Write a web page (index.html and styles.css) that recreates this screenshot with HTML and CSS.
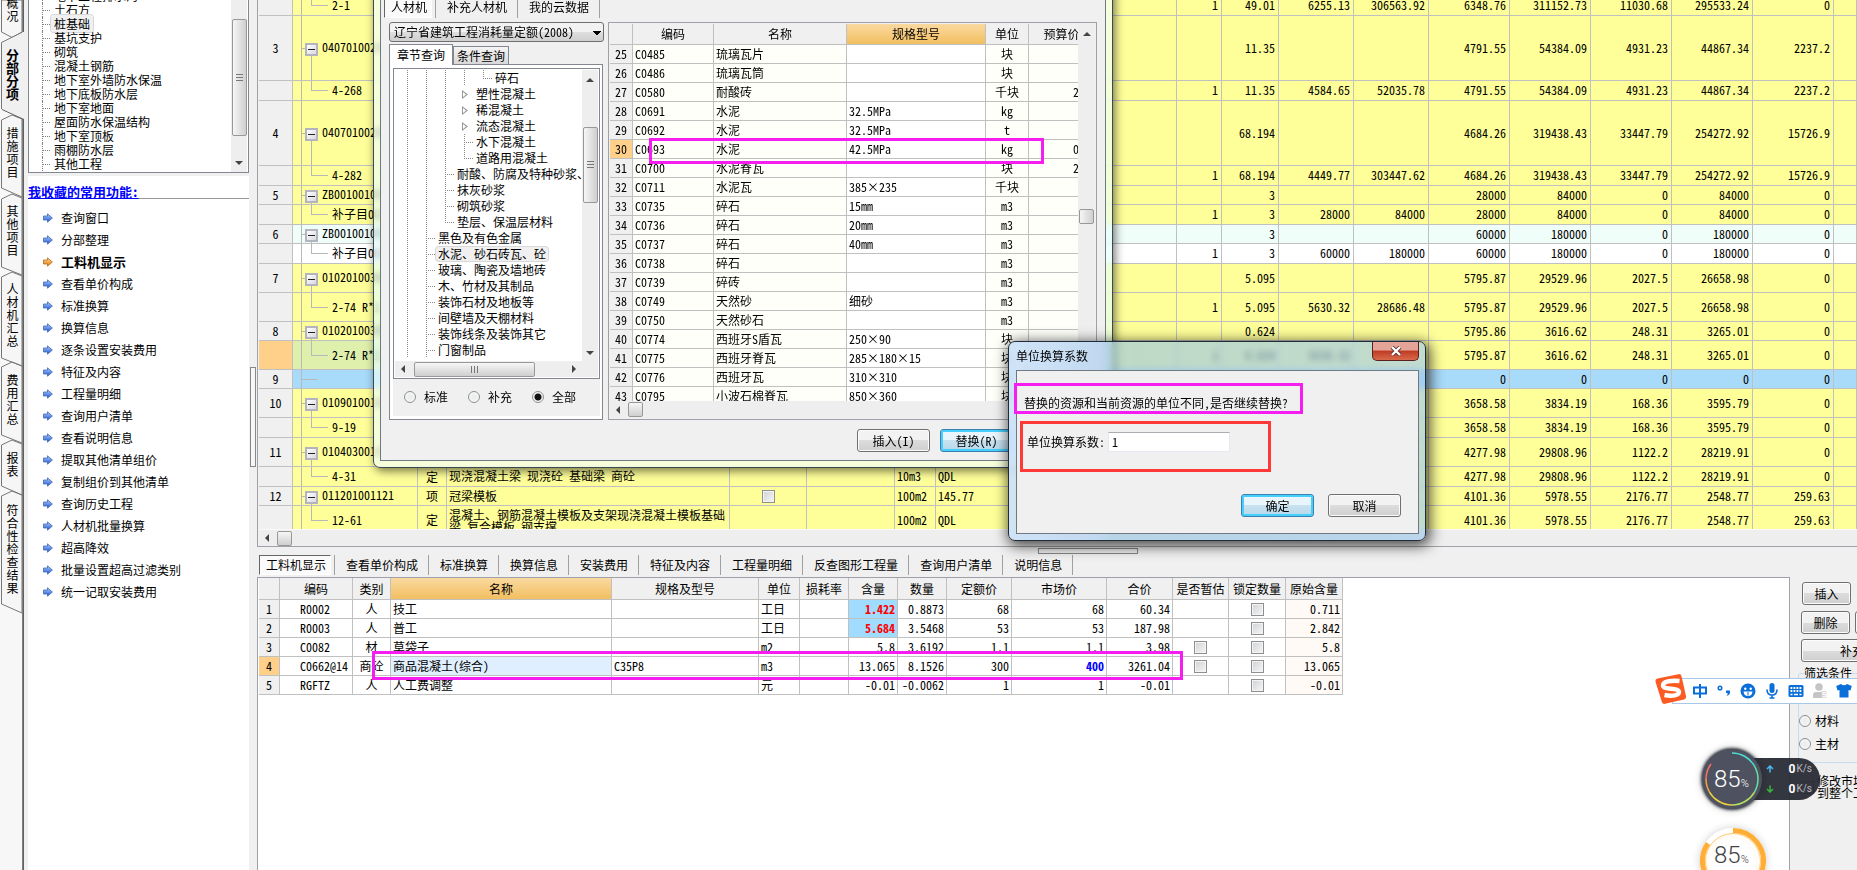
FILE: index.html
```html
<!DOCTYPE html>
<html lang="zh-CN">
<head>
<meta charset="utf-8">
<title>分部分项 - 工料机显示</title>
<link rel="stylesheet" href="styles.css">
</head>
<body>
<svg class="defs" width="0" height="0" aria-hidden="true">
  <defs>
    <linearGradient id="blueFill" x1="0" y1="0" x2="0" y2="1"><stop offset="0" stop-color="#b4cdf8"/><stop offset="1" stop-color="#1f57d0"/></linearGradient>
    <linearGradient id="orangeFill" x1="0" y1="0" x2="0" y2="1"><stop offset="0" stop-color="#ffd9a0"/><stop offset="1" stop-color="#e07808"/></linearGradient>
    <symbol id="arrow" viewBox="0 0 10 10"><path d="M.5 3h4V.8L9.4 5 4.500 9.200V7h-4z" stroke="#3c68b8" stroke-width=".8"/></symbol>
    <symbol id="arrow-hot" viewBox="0 0 10 10"><path d="M.5 3h4V.8L9.400 5 4.500 9.200V7h-4z" stroke="#b86a18" stroke-width=".8"/></symbol>
  </defs>
</svg>
<div class="app">
  <nav class="strip" aria-label="模块">
    <svg class="strip-lines" width="24" height="870" viewBox="0 0 24 870" aria-hidden="true">
      <path class="tab-face" d="M1.500 0V32L12 37.500 22 32V0zM1.500 120V188L22 197V119L12 115zM1.500 199V267L22 275V198L12 194zM1.500 277V358L22 366V276L12 272zM1.500 367V435L22 443V366L12 362zM1.500 445V486L22 495V444L12 440zM1.500 496V604L22 613V495L12 491z"/>
      <path class="tab-active" d="M1.500 42.500L24 32V119L1.500 109z"/>
      <path class="tab-rim" d="M22.500 32L1.500 42.500V109"/>
      <path class="tab-edge" d="M22.500 119V870M22.500 0V32"/>
      <path class="tab-shade" d="M23.500 119V870M23.500 0V32M2 109.500L24 119.500"/>
    </svg>
    <button type="button">工程概况</button>
    <button type="button" class="active">分部分项</button>
    <button type="button">措施项目</button>
    <button type="button">其他项目</button>
    <button type="button">人材机汇总</button>
    <button type="button">费用汇总</button>
    <button type="button">报表</button>
    <button type="button">符合性检查结果</button>
  </nav>

  <aside class="sidebar">
    <div class="sections">
      <ul class="section-tree">
        <li><span>地下工程排水沟</span></li>
        <li><span>土石方</span></li>
        <li><span class="picked">桩基础</span></li>
        <li><span>基坑支护</span></li>
        <li><span>砌筑</span></li>
        <li><span>混凝土钢筋</span></li>
        <li><span>地下室外墙防水保温</span></li>
        <li><span>地下底板防水层</span></li>
        <li><span>地下室地面</span></li>
        <li><span>屋面防水保温结构</span></li>
        <li><span>地下室顶板</span></li>
        <li><span>雨棚防水层</span></li>
        <li><span>其他工程</span></li>
      </ul>
      <div class="vscroll side-scroll"><i class="thumb grip"></i><i class="down"></i></div>
    </div>
    <div class="favorites">
      <h2>我收藏的常用功能:</h2>
      <ul>
        <li><svg><use href="#arrow"/></svg><a href="#">查询窗口</a></li>
        <li><svg><use href="#arrow"/></svg><a href="#">分部整理</a></li>
        <li class="hot"><svg><use href="#arrow-hot"/></svg><a href="#">工料机显示</a></li>
        <li><svg><use href="#arrow"/></svg><a href="#">查看单价构成</a></li>
        <li><svg><use href="#arrow"/></svg><a href="#">标准换算</a></li>
        <li><svg><use href="#arrow"/></svg><a href="#">换算信息</a></li>
        <li><svg><use href="#arrow"/></svg><a href="#">逐条设置安装费用</a></li>
        <li><svg><use href="#arrow"/></svg><a href="#">特征及内容</a></li>
        <li><svg><use href="#arrow"/></svg><a href="#">工程量明细</a></li>
        <li><svg><use href="#arrow"/></svg><a href="#">查询用户清单</a></li>
        <li><svg><use href="#arrow"/></svg><a href="#">查看说明信息</a></li>
        <li><svg><use href="#arrow"/></svg><a href="#">提取其他清单组价</a></li>
        <li><svg><use href="#arrow"/></svg><a href="#">复制组价到其他清单</a></li>
        <li><svg><use href="#arrow"/></svg><a href="#">查询历史工程</a></li>
        <li><svg><use href="#arrow"/></svg><a href="#">人材机批量换算</a></li>
        <li><svg><use href="#arrow"/></svg><a href="#">超高降效</a></li>
        <li><svg><use href="#arrow"/></svg><a href="#">批量设置超高过滤类别</a></li>
        <li><svg><use href="#arrow"/></svg><a href="#">统一记取安装费用</a></li>
      </ul>
    </div>
  </aside>

  <div class="gutter"><i></i></div>

  <main class="main">
    <section class="bill">
      <div class="bill-view">
        <table class="grid bill-grid">
          <colgroup><col class="c34"><col class="c125"><col class="c29"><col class="c283"><col class="c77"><col class="c88"><col class="c41"><col class="c241"><col class="c45"><col class="c57"><col class="c75"><col class="c75"><col class="c81"><col class="c81"><col class="c81"><col class="c81"><col class="c81"><col></colgroup>
          <tbody>
            <tr class="h20"><th><td class="kid">2-1<td colspan="6"><td>1<td>49.01<td>6255.13<td>306563.92<td>6348.76<td>311152.73<td>11030.68<td>295533.24<td>0<td></tr>
            <tr class="h65"><th>3<td class="dad"><button type="button" class="toggle" aria-label="折叠"></button>040701002003<td colspan="6"><td><td>11.35<td><td><td>4791.55<td>54384.09<td>4931.23<td>44867.34<td>2237.2<td></tr>
            <tr class="h20"><th><td class="kid">4-268<td colspan="6"><td>1<td>11.35<td>4584.65<td>52035.78<td>4791.55<td>54384.09<td>4931.23<td>44867.34<td>2237.2<td></tr>
            <tr class="h65"><th>4<td class="dad"><button type="button" class="toggle" aria-label="折叠"></button>040701002004<td colspan="6"><td><td>68.194<td><td><td>4684.26<td>319438.43<td>33447.79<td>254272.92<td>15726.9<td></tr>
            <tr class="h20"><th><td class="kid">4-282<td colspan="6"><td>1<td>68.194<td>4449.77<td>303447.62<td>4684.26<td>319438.43<td>33447.79<td>254272.92<td>15726.9<td></tr>
            <tr><th>5<td class="dad"><button type="button" class="toggle" aria-label="折叠"></button>ZB001001001<td colspan="6"><td><td>3<td><td><td>28000<td>84000<td>0<td>84000<td>0<td></tr>
            <tr class="h20"><th><td class="kid">补子目001<td colspan="6"><td>1<td>3<td>28000<td>84000<td>28000<td>84000<td>0<td>84000<td>0<td></tr>
            <tr class="mint"><th>6<td class="dad"><button type="button" class="toggle" aria-label="折叠"></button>ZB001001002<td colspan="6"><td><td>3<td><td><td>60000<td>180000<td>0<td>180000<td>0<td></tr>
            <tr class="h20 plain"><th><td class="kid">补子目002<td colspan="6"><td>1<td>3<td>60000<td>180000<td>60000<td>180000<td>0<td>180000<td>0<td></tr>
            <tr class="h29"><th>7<td class="dad"><button type="button" class="toggle" aria-label="折叠"></button>010201003001<td colspan="6"><td><td>5.095<td><td><td>5795.87<td>29529.96<td>2027.5<td>26658.98<td>0<td></tr>
            <tr class="h29"><th><td class="kid">2-74 R*1.15<td colspan="6"><td>1<td>5.095<td>5630.32<td>28686.48<td>5795.87<td>29529.96<td>2027.5<td>26658.98<td>0<td></tr>
            <tr><th>8<td class="dad"><button type="button" class="toggle" aria-label="折叠"></button>010201003002<td colspan="6"><td><td>0.624<td><td><td>5795.86<td>3616.62<td>248.31<td>3265.01<td>0<td></tr>
            <tr class="h29 current"><th><td class="kid">2-74 R*1.15<td colspan="6"><td>1<td>0.624<td>5630.32<td><td>5795.87<td>3616.62<td>248.31<td>3265.01<td>0<td></tr>
            <tr class="blue"><th>9<td class="stub"><td colspan="6"><td><td><td><td><td>0<td>0<td>0<td>0<td>0<td></tr>
            <tr class="h29"><th>10<td class="dad"><button type="button" class="toggle" aria-label="折叠"></button>010901001001<td colspan="6"><td><td><td><td><td>3658.58<td>3834.19<td>168.36<td>3595.79<td>0<td></tr>
            <tr class="h20"><th><td class="kid">9-19<td colspan="6"><td><td><td><td><td>3658.58<td>3834.19<td>168.36<td>3595.79<td>0<td></tr>
            <tr class="h29"><th>11<td class="dad"><button type="button" class="toggle" aria-label="折叠"></button>010403001001<td colspan="6"><td><td><td><td><td>4277.98<td>29808.96<td>1122.2<td>28219.91<td>0<td></tr>
            <tr class="h20"><th><td class="kid">4-31<td class="mid">定<td class="txt">现浇混凝土梁 现浇砼 基础梁 商砼<td><td><td class="txt">10m3<td class="txt">QDL<td><td><td><td><td>4277.98<td>29808.96<td>1122.2<td>28219.91<td>0<td></tr>
            <tr><th>12<td class="dad"><button type="button" class="toggle" aria-label="折叠"></button>011201001121<td class="mid">项<td class="txt">冠梁模板<td class="mid"><input type="checkbox" aria-label="冠梁模板"><td><td class="txt">100m2<td class="txt">145.77<td><td><td><td><td>4101.36<td>5978.55<td>2176.77<td>2548.77<td>259.63<td></tr>
            <tr class="h29"><th><td class="kid">12-61<td class="mid">定<td class="txt tight">混凝土、钢筋混凝土模板及支架现浇混凝土模板基础梁 复合模板 钢支撑<td><td><td class="txt">100m2<td class="txt">QDL<td><td><td><td><td>4101.36<td>5978.55<td>2176.77<td>2548.77<td>259.63<td></tr>
          </tbody>
        </table>
      </div>
      <div class="hscroll"><i class="left"></i><i class="thumb knob"></i></div>
    </section>
    <div class="splitter"><i></i></div>

    <nav class="detail-tabs" aria-label="明细">
      <button type="button" class="on">工料机显示</button>
      <button type="button">查看单价构成</button>
      <button type="button">标准换算</button>
      <button type="button">换算信息</button>
      <button type="button">安装费用</button>
      <button type="button">特征及内容</button>
      <button type="button">工程量明细</button>
      <button type="button">反查图形工程量</button>
      <button type="button">查询用户清单</button>
      <button type="button">说明信息</button>
    </nav>

    <div class="detail">
      <section class="detail-view">
        <table class="grid detail-grid">
          <colgroup><col class="c21"><col class="c73"><col class="c38"><col class="c221"><col class="c147"><col class="c41"><col class="c49"><col class="c49"><col class="c49"><col class="c65"><col class="c95"><col class="c66"><col class="c56"><col class="c57"><col class="c57"></colgroup>
          <thead><tr><th><th>编码<th>类别<th class="lit">名称<th>规格及型号<th>单位<th>损耗率<th>含量<th>数量<th>定额价<th>市场价<th>合价<th>是否暂估<th>锁定数量<th>原始含量</tr></thead>
          <tbody>
            <tr><th>1<td class="code">R0002<td class="mid">人<td class="txt">技工<td><td class="txt">工日<td><td class="changed">1.422<td>0.8873<td>68<td>68<td>60.34<td><td class="mid"><input type="checkbox" aria-label="锁定数量 1"><td class="orig">0.711</tr>
            <tr><th>2<td class="code">R0003<td class="mid">人<td class="txt">普工<td><td class="txt">工日<td><td class="changed">5.684<td>3.5468<td>53<td>53<td>187.98<td><td class="mid"><input type="checkbox" aria-label="锁定数量 2"><td class="orig">2.842</tr>
            <tr><th>3<td class="code">C0082<td class="mid">材<td class="txt">草袋子<td><td class="txt">m2<td><td>5.8<td>3.6192<td>1.1<td>1.1<td>3.98<td class="mid"><input type="checkbox" aria-label="是否暂估 3"><td class="mid"><input type="checkbox" aria-label="锁定数量 3"><td class="orig">5.8</tr>
            <tr><th class="row-on">4<td class="code">C0662@14<td class="mid">商砼<td class="txt sel">商品混凝土(综合)<td class="txt">C35P8<td class="txt">m3<td><td>13.065<td>8.1526<td>300<td class="price">400<td>3261.04<td class="mid"><input type="checkbox" aria-label="是否暂估 4"><td class="mid"><input type="checkbox" aria-label="锁定数量 4"><td class="orig">13.065</tr>
            <tr><th>5<td class="code">RGFTZ<td class="mid">人<td class="txt">人工费调整<td><td class="txt">元<td><td>-0.01<td>-0.0062<td>1<td>1<td>-0.01<td><td class="mid"><input type="checkbox" aria-label="锁定数量 5"><td class="orig">-0.01</tr>
          </tbody>
        </table>
      </section>
      <aside class="tools">
        <button type="button" class="btn">插入</button>
        <div class="tool-row"><button type="button" class="btn">删除</button><button type="button" class="btn">查询</button></div>
        <button type="button" class="btn wide">补充</button>
        <fieldset>
          <legend>筛选条件</legend>
          <label><input type="radio" name="filter">人工</label>
          <label><input type="radio" name="filter">材料</label>
          <label><input type="radio" name="filter">主材</label>
        </fieldset>
        <label class="sync"><input type="checkbox" checked><span>修改市场价同步到整个工程</span></label>
      </aside>
    </div>
  </main>
</div>

<section class="glass library" aria-label="查询">
  <div class="client">
    <nav class="detail-tabs lib-tabs" aria-label="资源">
      <button type="button" class="on">人材机</button>
      <button type="button">补充人材机</button>
      <button type="button">我的云数据</button>
    </nav>
    <div class="lib-body">
      <div class="lib-left">
        <select aria-label="定额库"><option>辽宁省建筑工程消耗量定额(2008)</option></select>
        <div class="page-tabs"><button type="button" class="on">章节查询</button><button type="button">条件查询</button></div>
        <div class="page">
          <div class="page-in">
            <div class="lib-tree">
              <div class="tree-view">
                <ul>
                  <li><i></i><i></i><i></i><i></i><i class="end"></i><span>碎石</span></li>
                  <li><i></i><i></i><i></i><i class="tri"></i><span>塑性混凝土</span></li>
                  <li><i></i><i></i><i></i><i class="tri"></i><span>稀混凝土</span></li>
                  <li><i></i><i></i><i></i><i class="tri"></i><span>流态混凝土</span></li>
                  <li><i></i><i></i><i></i><i class="tee"></i><span>水下混凝土</span></li>
                  <li><i></i><i></i><i></i><i class="end"></i><span>道路用混凝土</span></li>
                  <li><i></i><i></i><i class="tee"></i><span>耐酸、防腐及特种砂浆、</span></li>
                  <li><i></i><i></i><i class="tee"></i><span>抹灰砂浆</span></li>
                  <li><i></i><i></i><i class="tee"></i><span>砌筑砂浆</span></li>
                  <li><i></i><i></i><i class="end"></i><span>垫层、保温层材料</span></li>
                  <li><i></i><i class="tee"></i><span>黑色及有色金属</span></li>
                  <li><i></i><i class="tee"></i><span class="picked">水泥、砂石砖瓦、砼</span></li>
                  <li><i></i><i class="tee"></i><span>玻璃、陶瓷及墙地砖</span></li>
                  <li><i></i><i class="tee"></i><span>木、竹材及其制品</span></li>
                  <li><i></i><i class="tee"></i><span>装饰石材及地板等</span></li>
                  <li><i></i><i class="tee"></i><span>间壁墙及天棚材料</span></li>
                  <li><i></i><i class="tee"></i><span>装饰线条及装饰其它</span></li>
                  <li><i></i><i class="tee"></i><span>门窗制品</span></li>
                </ul>
                <div class="vscroll tree-vs"><i class="up"></i><i class="thumb grip"></i><i class="down"></i></div>
              </div>
              <div class="hscroll tree-hs"><i class="left"></i><i class="thumb grip-h"></i><i class="right"></i></div>
            </div>
            <div class="scope">
              <label><input type="radio" name="scope">标准</label>
              <label><input type="radio" name="scope">补充</label>
              <label><input type="radio" name="scope" checked>全部</label>
            </div>
          </div>
        </div>
      </div>
      <div class="lib-right">
        <div class="res-view">
          <div class="res-clip">
          <table class="grid res-grid">
            <colgroup><col class="c23"><col class="c81"><col class="c133"><col class="c139"><col class="c43"><col class="c66"></colgroup>
            <thead><tr><th><th>编码<th>名称<th class="lit">规格型号<th>单位<th>预算价</tr></thead>
            <tbody>
              <tr><th>25<td>C0485<td>琉璃瓦片<td><td>块<td></tr>
              <tr><th>26<td>C0486<td>琉璃瓦筒<td><td>块<td></tr>
              <tr><th>27<td>C0580<td>耐酸砖<td><td>千块<td>2800</tr>
              <tr><th>28<td>C0691<td>水泥<td>32.5MPa<td>kg<td></tr>
              <tr><th>29<td>C0692<td>水泥<td>32.5MPa<td>t<td></tr>
              <tr><th class="row-on">30<td>C0693<td>水泥<td class="sel">42.5MPa<td>kg<td>0.38</tr>
              <tr><th>31<td>C0700<td>水泥脊瓦<td><td>块<td>2.55</tr>
              <tr><th>32<td>C0711<td>水泥瓦<td>385×235<td>千块<td></tr>
              <tr><th>33<td>C0735<td>碎石<td>15mm<td>m3<td></tr>
              <tr><th>34<td>C0736<td>碎石<td>20mm<td>m3<td></tr>
              <tr><th>35<td>C0737<td>碎石<td>40mm<td>m3<td></tr>
              <tr><th>36<td>C0738<td>碎石<td><td>m3<td></tr>
              <tr><th>37<td>C0739<td>碎砖<td><td>m3<td></tr>
              <tr><th>38<td>C0749<td>天然砂<td>细砂<td>m3<td></tr>
              <tr><th>39<td>C0750<td>天然砂石<td><td>m3<td></tr>
              <tr><th>40<td>C0774<td>西班牙S盾瓦<td>250×90<td>块<td></tr>
              <tr><th>41<td>C0775<td>西班牙脊瓦<td>285×180×15<td>块<td></tr>
              <tr><th>42<td>C0776<td>西班牙瓦<td>310×310<td>块<td></tr>
              <tr><th>43<td>C0795<td>小波石棉脊瓦<td>850×360<td>块<td></tr>
            </tbody>
          </table>
          </div>
          <div class="vscroll res-vs"><i class="up"></i><i class="thumb knob"></i></div>
        </div>
        <div class="hscroll res-hs"><i class="left"></i><i class="thumb knob"></i></div>
      </div>
    </div>
    <div class="lib-foot">
      <button type="button" class="btn">插入(I)</button>
      <button type="button" class="btn primary">替换(R)</button>
    </div>
  </div>
</section>

<section class="glass dialog" role="dialog" aria-labelledby="dlg-title">
  <header><h1 id="dlg-title">单位换算系数</h1>
    <button type="button" class="close" aria-label="关闭"><svg width="12" height="10" viewBox="0 0 12 10"><path d="M2 1l8 8M10 1L2 9" stroke="#5a3030" stroke-width="4"/><path d="M2 1l8 8M10 1L2 9" stroke="#fff" stroke-width="2.400"/></svg></button>
  </header>
  <div class="client">
    <p>替换的资源和当前资源的单位不同,是否继续替换?</p>
    <div class="field"><label for="factor">单位换算系数:</label><input id="factor" type="text" value="1"></div>
    <div class="actions"><button type="button" class="btn primary">确定</button><button type="button" class="btn">取消</button></div>
  </div>
</section>

<div class="mark mark-resource"></div>
<div class="mark mark-detail"></div>
<div class="mark mark-message"></div>
<div class="mark mark-factor"></div>

<div class="ime">
  <svg class="ime-logo" width="34" height="32" viewBox="0 0 34 32" aria-hidden="true"><path d="M3.500 5.500L24.500 1.200q2.500-.5 3 2L32 23q.5 2.600-2 3.400L11 30.800q-2.600.6-3.200-2L1.600 9q-.7-2.800 1.900-3.500z" fill="#fb5a22"/><path d="M25.500 8C17 7 8.500 8.500 9 12.800c.6 4.400 15 1.500 16 5.800.6 3.700-6.800 5-14.500 3.400" fill="none" stroke="#fff" stroke-width="4.400"/></svg>
  <svg width="16" height="16" viewBox="0 0 16 16"><path d="M2 4.500h12v6H2zM8 1v14" fill="none" stroke="#0a6fd8" stroke-width="2"/></svg>
  <svg width="16" height="16" viewBox="0 0 16 16"><circle cx="4" cy="5" r="1.800" fill="none" stroke="#0a6fd8" stroke-width="1.500"/><path d="M10 7.500h4q.5 4.500-3.500 5.500 1.500-1.500 1-3H10z" fill="#0a6fd8"/></svg>
  <svg width="16" height="16" viewBox="0 0 16 16"><circle cx="8" cy="8" r="7.500" fill="#0a6fd8"/><path d="M3.500 8.500h9q-.5 4.500-4.500 4.500t-4.500-4.500z" fill="#fff"/><path d="M8 9v3.500" stroke="#0a6fd8"/><circle cx="5.300" cy="5.800" r="1.200" fill="#fff"/><circle cx="10.700" cy="5.800" r="1.200" fill="#fff"/></svg>
  <svg width="16" height="16" viewBox="0 0 16 16"><rect x="5.500" y="0" width="5" height="10" rx="2.500" fill="#0a6fd8"/><path d="M3 6.500q0 5.500 5 5.500t5-5.500M8 12v3.500M5.500 15h5" fill="none" stroke="#0a6fd8" stroke-width="1.600"/></svg>
  <svg width="16" height="16" viewBox="0 0 16 16"><rect x=".5" y="2" width="15" height="12" rx="1.500" fill="#0a6fd8"/><path d="M2.500 5h11M2.500 8h11" stroke="#fff" stroke-width="1.800" stroke-dasharray="1.800 1.200"/><path d="M2.500 11.500h2M6 11.500h4M11.500 11.500h2" stroke="#fff" stroke-width="1.500"/></svg>
  <svg width="16" height="16" viewBox="0 0 16 16"><circle cx="7" cy="4" r="3.800" fill="#c4c4c4"/><path d="M1 15v-3q0-3 3-3h6v6z" fill="#c4c4c4"/><path d="M9.500 8h5v7h-5z" fill="#d8d8d8"/><path d="M13.800 9.500h-3v2h3v2.300h-3.300" fill="none" stroke="#fff"/></svg>
  <svg width="16" height="16" viewBox="0 0 16 16"><path d="M5 1q3 2.500 6 0l4.800 2-1.300 4.500-2-.5v7.500h-9V7l-2 .5L.2 3z" fill="#0a6fd8"/></svg>
</div>

<div class="meter">
  <div class="meter-dial">
    <svg width="60" height="60" viewBox="0 0 60 60" fill="none" stroke-width="1.500" aria-hidden="true"><path d="M30 4A26 26 0 0 1 52.500 17" stroke="#4fdcd0"/><path d="M52.500 17A26 26 0 0 1 52.500 43" stroke="#66e0a0"/><path d="M52.500 43A26 26 0 0 1 30 56" stroke="#b8e060"/><path d="M30 56A26 26 0 0 1 7.500 43" stroke="#f0d040"/><path d="M7.500 43A26 26 0 0 1 4 30" stroke="#f8a040"/><path d="M4 30A26 26 0 0 1 9 15" stroke="#f87060"/></svg>
    <span>85<small>%</small></span>
  </div>
  <div class="meter-rates">
    <div><svg width="8" height="8" viewBox="0 0 8 8"><path d="M4 7.500V1.500M1 4l3-3 3 3" fill="none" stroke="#4cb8f8" stroke-width="1.500"/></svg><b>0</b>K/s</div>
    <div><svg width="8" height="8" viewBox="0 0 8 8"><path d="M4 .5v6M1 4l3 3 3-3" fill="none" stroke="#38b838" stroke-width="1.500"/></svg><b>0</b>K/s</div>
  </div>
</div>
<div class="ball">
  <svg width="66" height="66" viewBox="0 0 66 66" fill="none" aria-hidden="true"><circle cx="33" cy="33" r="30.500" stroke="#fff" stroke-width="5"/><path d="M33 2.500A30.500 30.500 0 1 1 8 15.500" stroke="#ffae35" stroke-width="5"/><circle cx="33" cy="33" r="27.500" stroke="#ffc870"/></svg>
  <span>85<small>%</small></span>
</div>
</body>
</html>
```

FILE: styles.css
```css
* { box-sizing: border-box; }
body {
  margin: 0;
  height: 100vh;
  overflow: hidden;
  position: relative;
  background: #f0f0f0;
  color: #000;
  font: 12px/14px "Noto Sans Mono CJK SC", "Noto Sans CJK SC", "Liberation Sans", sans-serif;
}
button, input, select { font: inherit; color: inherit; margin: 0; padding: 0; }
ul { list-style: none; margin: 0; padding: 0; }
i { font-style: normal; }
.defs { position: absolute; }
#arrow path { fill: url(#blueFill); }
#arrow-hot path { fill: url(#orangeFill); }

.app { display: flex; height: 100vh; overflow: hidden; }

/* module strip */
.strip {
  flex: 0 0 28px;
  position: relative;
  display: flex;
  flex-direction: column;
  align-items: flex-start;
  gap: 26px;
  padding-left: 6px;
  overflow: hidden;
  background: linear-gradient(90deg, #f7f7f7 24px, #f0f0f0 24px);
}
.strip-lines { position: absolute; left: 0; top: 0; }
.tab-face { fill: #f6f6f6; stroke: #777; }
.tab-active { fill: #f0f0f0; stroke: none; }
.tab-rim { fill: none; stroke: #777; }
.tab-edge { stroke: #808080; }
.tab-shade { stroke: #606060; stroke-width: 1; }
.strip button {
  position: relative;
  width: 13px;
  border: 0;
  background: none;
  line-height: 13px;
  word-break: break-all;
  text-align: center;
}
.strip button:first-of-type { margin-top: -30px; }
.strip .active { font-size: 13px; font-weight: bold; }

/* left panel */
.sidebar { flex: 0 0 221px; display: flex; flex-direction: column; gap: 3px; }
.sections {
  display: flex;
  height: 173px;
  overflow: hidden;
  background: #fff;
  border: 1px solid #828790;
  border-top: 0;
  padding-right: 1px;
}
.section-tree { flex: 1; margin-top: -11px; padding-left: 13px; }
.section-tree li {
  height: 14px;
  padding-left: 8px;
  border-left: 1px dotted #808080;
  background: repeating-linear-gradient(90deg, #808080 0 1px, transparent 1px 2px) 0 7px / 8px 1px no-repeat;
}
.section-tree span { padding: 0 3px; white-space: nowrap; }
.picked { border-radius: 3px; background: #f0f0f0; box-shadow: 0 0 0 1px #d8d8d8; }

.favorites { flex: 1; background: #fff; }
.favorites h2 {
  margin: 0;
  padding-top: 8px;
  height: 23px;
  font-size: 13px;
  line-height: 15px;
  color: #00f;
  text-decoration: underline;
  border-bottom: 1px solid #999;
}
.favorites ul { padding: 8px 0 0 15px; }
.favorites li { display: flex; align-items: center; gap: 8px; height: 22px; }
.favorites svg { width: 10px; height: 10px; }
.favorites a { color: #000; text-decoration: none; }
.favorites .hot { font-size: 13px; font-weight: bold; }

.gutter { flex: 0 0 8px; padding: 367px 1px 0; }
.gutter i { display: block; width: 6px; height: 100px; border: 1px solid #888; background: #f6f6f6; }

.main { flex: 1; min-width: 0; display: flex; flex-direction: column; }

/* tables */
.grid { border-spacing: 0; table-layout: fixed; }
.grid th, .grid td {
  height: 19px;
  padding: 0 2px;
  border-right: 1px solid #c0c0c0;
  border-bottom: 1px solid #c0c0c0;
  font-weight: normal;
  white-space: nowrap;
  overflow: hidden;
}
.grid th { background: #f0f0f0; text-align: center; padding: 0; }
.grid td { text-align: right; }
.grid td.txt { text-align: left; }
.grid td.mid { text-align: center; padding: 0; }
.grid th.lit { background: linear-gradient(#fad9a0, #f2bf60); }
.grid th.row-on, .current th:first-child { background: #ffd08a; }
.grid td.sel { background: #e0efff; }
.grid input { display: block; margin: 0 auto; }
.c21 { width: 21px; } .c23 { width: 23px; } .c29 { width: 29px; } .c34 { width: 34px; }
.c38 { width: 38px; } .c41 { width: 41px; } .c43 { width: 43px; } .c45 { width: 45px; }
.c49 { width: 49px; } .c56 { width: 56px; } .c57 { width: 57px; } .c65 { width: 65px; }
.c66 { width: 66px; } .c73 { width: 73px; } .c75 { width: 75px; } .c77 { width: 77px; }
.c81 { width: 81px; } .c88 { width: 88px; } .c95 { width: 95px; } .c125 { width: 125px; }
.c133 { width: 133px; } .c139 { width: 139px; } .c147 { width: 147px; } .c221 { width: 221px; }
.c241 { width: 241px; } .c283 { width: 283px; }

/* bill of quantities */
.bill { border-left: 1px solid #a0a0a8; border-bottom: 1px solid #a0a0a8; padding-left: 1px; }
.bill-view { height: 529px; overflow: hidden; }
.bill-grid { width: 100%; margin-top: -4px; }
.bill-grid tr { background: #ffff99; }
.bill-grid tr.mint { background: #f0fefa; }
.bill-grid tr.plain { background: #fff; }
.bill-grid tr.blue { background: #a8dafa; }
.bill-grid .h20 > * { height: 20px; padding-bottom: 1px; }
.bill-grid .h29 > * { height: 29px; }
.bill-grid .h65 > * { height: 65px; }
.bill-grid td:nth-child(n+4):not(.txt):not(.mid) { padding-right: 3px; }
.bill-grid td.tight { white-space: normal; line-height: 12px; vertical-align: top; padding-top: 3px; }
.grid td.dad, .grid td.kid, .grid td.stub { text-align: left; background-repeat: no-repeat; }
.grid td.dad {
  padding-left: 12px;
  background-image: linear-gradient(#b8b8b8, #b8b8b8), linear-gradient(#b8b8b8, #b8b8b8), linear-gradient(#b8b8b8, #b8b8b8);
  background-size: 1px 100%, 4px 1px, 1px 50%;
  background-position: 8px 0, 8px 50%, 18px 100%;
}
.grid td.kid {
  padding-left: 39px;
  background-image: linear-gradient(#b8b8b8, #b8b8b8), linear-gradient(#b8b8b8, #b8b8b8), linear-gradient(#b8b8b8, #b8b8b8);
  background-size: 1px 100%, 17px 1px, 1px 50%;
  background-position: 8px 0, 18px 50%, 18px 0;
}
.grid td.stub {
  background-image: linear-gradient(#b8b8b8, #b8b8b8), linear-gradient(#b8b8b8, #b8b8b8);
  background-size: 1px 100%, 16px 1px;
  background-position: 8px 0, 8px 50%;
}
.current td.kid { background-color: #dff0ac; }
.toggle {
  width: 13px;
  height: 13px;
  margin-right: 4px;
  border: 2px solid #b4b4c0;
  vertical-align: middle;
  background: linear-gradient(#222, #222) 1px 4px / 7px 1px no-repeat, linear-gradient(135deg, #fff, #d8d8e0);
}

/* scroll bars */
.hscroll, .vscroll { display: flex; align-items: center; background: #eee; }
.vscroll { flex-direction: column; flex: 0 0 16px; }
.hscroll { height: 17px; }
.thumb { border: 1px solid #989898; border-radius: 2px; background: linear-gradient(#f6f6f6, #cfcfcf); }
.vscroll .thumb { background: linear-gradient(90deg, #f6f6f6, #cfcfcf); width: 15px; }
.thumb.knob { width: 15px; height: 15px; }
.grip { display: flex; align-items: center; justify-content: center; }
.grip::after { content: ""; width: 7px; height: 8px; background: repeating-linear-gradient(#777 0 1px, transparent 1px 3px); }
.grip-h { display: flex; align-items: center; justify-content: center; }
.grip-h::after { content: ""; width: 8px; height: 7px; background: repeating-linear-gradient(90deg, #777 0 1px, transparent 1px 3px); }
.up, .down, .left, .right { border: 4px solid transparent; }
.up { border-top: 0; border-bottom-color: #444; }
.down { border-bottom: 0; border-top-color: #444; }
.left { border-left: 0; border-right-color: #444; }
.right { border-right: 0; border-left-color: #444; }
.bill .hscroll { padding-left: 6px; gap: 8px; border-top: 1px solid #fafafa; }
.side-scroll { padding: 19px 0 7px; justify-content: space-between; }
.side-scroll .thumb { height: 117px; }

.splitter { padding: 1px 0 0 781px; }
.splitter i { display: block; width: 100px; height: 6px; border: 1px solid #888; background: #eee; }

/* detail area */
.detail-tabs { display: flex; align-items: center; height: 23px; padding: 0 0 1px 2px; }
.detail-tabs button {
  height: 20px;
  padding: 0 10px 0 11px;
  border: 0;
  border-right: 1px solid #a0a0a0;
  background: none;
  white-space: nowrap;
}
.detail-tabs .on {
  padding: 0 4px 0 6px;
  margin-right: 3px;
  background: #fafafa;
  border: 1px solid #fff;
  border-top-color: #666;
  border-left-color: #666;
}
.detail-tabs .on + button { border-left: 1px solid #a0a0a0; }
.detail { flex: 1; display: flex; min-height: 0; }
.detail-view { flex: 1; min-width: 0; background: #fff; border: 1px solid #a0a0a8; border-bottom: 0; padding-left: 1px; }
.detail-grid { width: 1084px; }
.grid thead th { height: 22px; }
.grid td.code { text-align: left; padding-left: 20px; }
.grid td.changed { background: #a0dcff; color: #f00; font-weight: bold; }
.grid td.price { color: #00f; font-weight: bold; }
.grid td.orig { background: #fffaf5; }

/* push buttons and inputs */
.btn {
  width: 73px;
  height: 23px;
  border: 1px solid #707070;
  border-radius: 3px;
  box-shadow: inset 0 0 0 1px #fcfcfc;
  background: linear-gradient(#f2f2f2 0 50%, #dcdcdc 50%, #cfcfcf);
  white-space: nowrap;
}
.btn.primary {
  border-color: #3c7fb1;
  box-shadow: inset 0 0 0 2px #44d0fa;
  background: linear-gradient(#e8f5fc 0 50%, #c8e2f0 50%, #b8d8ea);
}
input[type="checkbox"] {
  appearance: none;
  width: 13px;
  height: 13px;
  border: 1px solid #8e8f8f;
  background: linear-gradient(135deg, #cfd2d6, #f6f6f6);
  box-shadow: inset 0 0 0 1px #f4f4f4;
}
input[type="radio"] {
  appearance: none;
  width: 12px;
  height: 12px;
  border: 1px solid #8e8f8f;
  border-radius: 50%;
  background: radial-gradient(#e8eaec, #fbfbfb);
}
input[type="radio"]:checked { background: radial-gradient(#111 0 3px, #f4f4f4 4px); }

.tools { flex: 0 0 67px; padding: 5px 0 0 11px; overflow: hidden; }
.tools .btn { width: 49px; flex: none; }
.tools > .btn { display: block; margin-left: 1px; }
.tool-row { display: flex; gap: 5px; margin: 6px 0 5px; }
.tools > .btn.wide { width: 102px; margin-left: 0; }
.tools fieldset { width: 110px; margin: 4px 0 0 -3px; padding: 6px 0 7px; border: 1px solid #c8dcec; border-radius: 3px; }
.tools legend { padding: 0; margin-left: 5px; }
.tools fieldset label { display: flex; align-items: center; gap: 4px; height: 23px; }
.sync { display: flex; align-items: center; gap: 3px; width: 100px; margin-top: 12px; line-height: 12px; }
.sync input { flex: none; }

/* glass windows */
.glass {
  position: absolute;
  border: 1px solid #3c4a50;
  border-radius: 7px;
  box-shadow: 2px 3px 10px rgba(0, 0, 0, .55);
  backdrop-filter: blur(3px);
}
.glass .client { border: 1px solid #707880; background: #f0f0f0; }
.library {
  left: 373px;
  top: -32px;
  width: 740px;
  padding: 30px 6px 6px;
  background: linear-gradient(rgba(245, 255, 245, .75), rgba(225, 255, 255, .6) 350px, rgba(245, 255, 240, .75));
}
.library .client { padding: 0 8px 8px; }
.lib-tabs { height: 18px; padding: 0; margin: 0 -5px; align-items: flex-end; }
.lib-tabs button { height: 20px; padding-bottom: 3px; }
.lib-tabs .on { padding-bottom: 3px; }
.lib-body { display: flex; gap: 4px; margin-top: 4px; }
.lib-left { flex: 0 0 215px; display: flex; flex-direction: column; }
.lib-left select {
  appearance: none;
  height: 20px;
  padding-left: 4px;
  border: 1px solid #707070;
  border-radius: 3px;
  background:
    linear-gradient(45deg, transparent 50%, #000 50%) 203px 8px / 4px 4px no-repeat,
    linear-gradient(-45deg, transparent 50%, #000 50%) 207px 8px / 4px 4px no-repeat,
    linear-gradient(#f2f2f2 0 50%, #dfdfdf 50%, #cfcfcf);
}
.page-tabs { display: flex; align-items: flex-end; height: 22px; }
.page-tabs button { height: 18px; padding: 0 3px; border: 1px solid #828790; border-bottom: 0; background: linear-gradient(#f4f4f4, #d8d8d8); }
.page-tabs .on { height: 21px; padding: 0 7px; background: #fff; position: relative; margin-bottom: -1px; }
.page { flex: 1; border: 1px solid #828790; background: #fff; padding: 3px 2px 3px 3px; width: 214px; }
.page-in { background: #f0f0f0; height: 100%; }
.lib-tree { border: 1px solid #828790; background: #fff; padding: 1px; }
.tree-view { display: flex; overflow: hidden; height: 291px; }
.tree-view ul { flex: 1; min-width: 0; padding-left: 12px; overflow: hidden; }
.tree-view li { display: flex; height: 16px; line-height: 16px; }
.tree-view li i {
  flex: 0 0 19px;
  background: repeating-linear-gradient(#888 0 1px, transparent 1px 2px) 0 0 / 1px 100% no-repeat;
}
.tree-view li i.tee, .tree-view li i.end {
  flex-basis: 12px;
  background:
    repeating-linear-gradient(#888 0 1px, transparent 1px 2px) 0 0 / 1px 100% no-repeat,
    repeating-linear-gradient(90deg, #888 0 1px, transparent 1px 2px) 0 8px / 9px 1px no-repeat;
}
.tree-view li i.end {
  background:
    repeating-linear-gradient(#888 0 1px, transparent 1px 2px) 0 0 / 1px 8px no-repeat,
    repeating-linear-gradient(90deg, #888 0 1px, transparent 1px 2px) 0 8px / 9px 1px no-repeat;
}
.tree-view li i.tri {
  flex-basis: 12px;
  background: none;
}
.tree-view li i.tri::before {
  content: "";
  display: block;
  width: 6px;
  height: 9px;
  margin: 4px 0 0 -2px;
  background: #999;
  clip-path: polygon(0 0, 100% 50%, 0 100%, 0 0, 1px 2px, 1px 7px, 4px 50%, 1px 2px);
}
.tree-view li span { white-space: nowrap; }
.tree-view li .picked { padding: 0 2px; margin: 1px -2px; line-height: 14px; }
.tree-vs { padding: 8px 0 6px; }
.tree-vs .thumb { height: 76px; margin: 45px 0 auto; }
.lib-tree .hscroll { height: 16px; padding: 0 22px 0 6px; gap: 9px; }
.tree-hs .grip-h { flex: 0 0 121px; height: 15px; }
.tree-hs .right { margin-left: auto; }
.scope { display: flex; gap: 16px; padding: 11px 0 0 11px; }
.scope label { display: flex; align-items: center; gap: 8px; width: 48px; white-space: nowrap; }
.scope input { flex: none; }

.lib-right { flex: 1; min-width: 0; border: 1px solid #a0a0a8; padding: 1px; background: #f0f0f0; }
.res-view { display: flex; height: 377px; overflow: hidden; }
.res-clip { flex: 1; min-width: 0; overflow: hidden; background: #fff; }
.res-grid { width: 485px; }
.res-grid thead th { height: 21px; }
.res-grid td { text-align: left; background: #fffffa; }
.res-grid td:nth-child(4) { background: #fff; }
.res-grid td:nth-child(5) { text-align: center; }
.res-grid td:nth-child(6) { text-align: left; padding-left: 44px; }
.res-vs { flex-basis: 17px; padding-top: 8px; }
.res-vs .knob { margin-top: 173px; }
.res-hs { padding-left: 6px; gap: 8px; height: 17px; }
.lib-foot { display: flex; justify-content: flex-end; gap: 10px; margin-top: 9px; padding-right: 84px; }

.dialog {
  left: 1008px;
  top: 341px;
  width: 418px;
  padding: 0 6px 6px 7px;
  border-color: #202c38;
  box-shadow: 2px 3px 14px 2px rgba(0, 0, 0, .7);
  background: linear-gradient(90deg, rgba(205, 226, 248, .92) 0, rgba(185, 212, 240, .85) 90px, rgba(150, 195, 225, .62) 105px, rgba(160, 200, 235, .65));
}
.dialog header { display: flex; justify-content: space-between; align-items: flex-start; height: 28px; }
.dialog h1 { margin: 7px 0 0; font-size: 12px; line-height: 14px; font-weight: normal; }
.close {
  width: 47px;
  height: 19px;
  display: flex;
  align-items: center;
  justify-content: center;
  border: 1px solid #5a2020;
  border-top: 0;
  border-radius: 0 0 5px 5px;
  background: linear-gradient(#e4a498 0 45%, #c03a24 50%, #d86a4c);
}
.dialog .client { padding: 24px 17px 16px 7px; }
.dialog p { margin: 0; line-height: 16px; }
.field { display: flex; align-items: center; gap: 3px; margin: 21px 0 42px 3px; }
.field input { width: 122px; height: 20px; padding: 0 3px 2px; border: 1px solid #e3e9ef; border-top-color: #abadb3; background: #fff; }
.actions { display: flex; justify-content: flex-end; gap: 14px; }

/* highlight frames */
.mark { position: absolute; border: 3px solid #f51df0; pointer-events: none; }
.mark-resource { left: 649px; top: 138px; width: 395px; height: 26px; }
.mark-detail { left: 372px; top: 651px; width: 811px; height: 29px; }
.mark-message { left: 1014px; top: 383px; width: 289px; height: 31px; }
.mark-factor { left: 1020px; top: 421px; width: 251px; height: 51px; border-color: #ff3838; }

/* input method bar */
.ime {
  position: absolute;
  left: 1672px;
  right: 0;
  top: 678px;
  height: 26px;
  display: flex;
  align-items: center;
  gap: 8px;
  padding-left: 19px;
  background: #fff;
  border: 1px solid #a8c8e8;
  border-right: 0;
}
.ime svg { flex: none; }
.ime .ime-logo { position: absolute; left: -19px; top: -6px; }

/* floating meters */
.meter { position: absolute; left: 1702px; top: 749px; display: flex; align-items: center; color: #fff; font-family: Roboto, sans-serif; }
.meter-dial {
  position: relative;
  z-index: 1;
  width: 60px;
  height: 60px;
  border-radius: 50%;
  background: #4e5260;
  box-shadow: 0 0 3px 1px #33363f, 0 0 8px rgba(0, 0, 0, .3);
}
.meter-dial svg, .ball svg { position: absolute; left: 0; top: 0; }
.meter-dial span { position: absolute; left: 12px; top: 17px; font-size: 24px; line-height: 26px; font-weight: 300; }
.meter small, .ball small { font-size: 11px; }
.meter-rates { width: 84px; margin-left: -26px; padding: 1px 8px 1px 30px; border-radius: 0 21px 21px 0; background: rgba(38, 40, 50, .93); }
.meter-rates div { display: flex; align-items: center; height: 20px; gap: 1px; font-size: 10px; color: #b8bac4; }
.meter-rates b { margin-left: auto; font-size: 12px; color: #fff; }
.ball { position: absolute; left: 1700px; top: 828px; width: 66px; height: 66px; border-radius: 50%; background: radial-gradient(#fff 40%, #fff0d8); box-shadow: 0 0 8px rgba(0, 0, 0, .2); font-family: Roboto, sans-serif; color: #444; }
.ball span { position: absolute; left: 14px; top: 14px; font-size: 24px; line-height: 26px; font-weight: 300; }
```
